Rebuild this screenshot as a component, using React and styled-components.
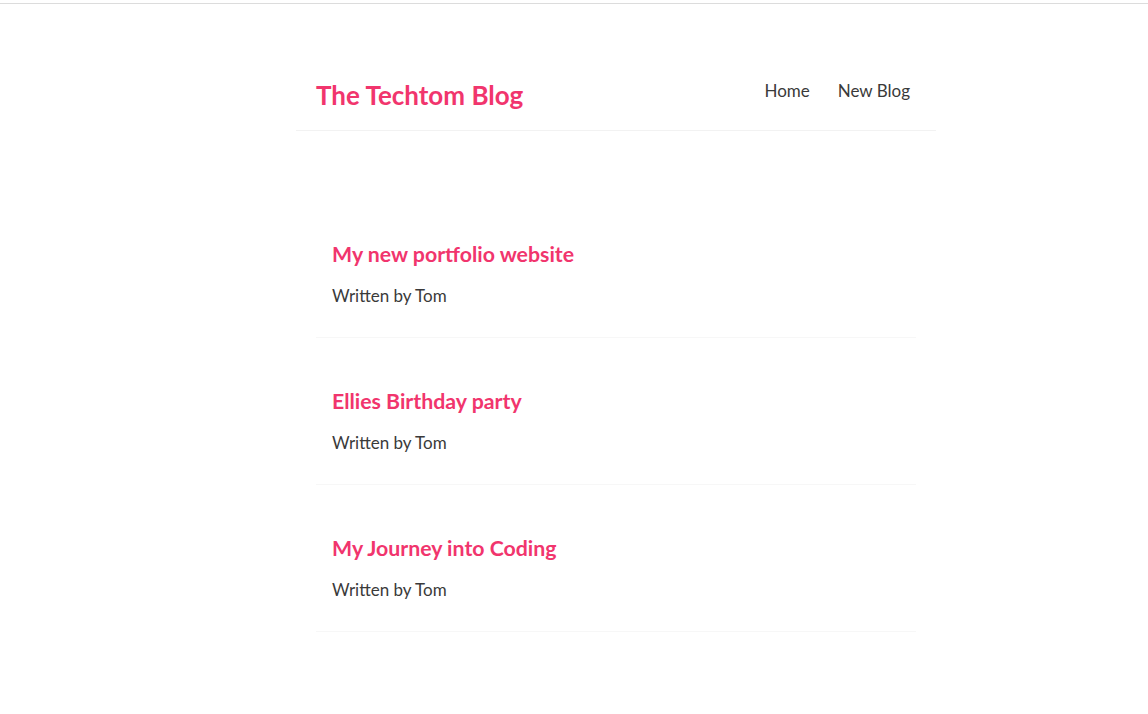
import React from "react";
import styled, { createGlobalStyle } from "styled-components";

const GlobalStyle = createGlobalStyle`
  body {
    margin: 0;
    background: #fff;
    font-family: Lato, "Noto Sans", sans-serif;
    color: #333;
  }
`;

const TopRule = styled.div`
  margin-top: 3px;
  height: 1px;
  background: #dcdcdc;
`;

const Page = styled.div`
  padding-left: 84px;
`;

const Navbar = styled.nav`
  box-sizing: border-box;
  width: 640px;
  height: 127px;
  margin: 0 auto;
  padding: 76px 20px 20px;
  display: flex;
  align-items: flex-start;
  border-bottom: 1px solid #f2f2f2;
`;

const Title = styled.h1`
  margin: 0;
  font-size: 26px;
  line-height: 30px;
  font-weight: 700;
  color: #f1356d;
`;

const Links = styled.div`
  margin-left: auto;
  display: flex;
`;

const NavLink = styled.a`
  margin-left: 16px;
  padding: 0 6px;
  font-size: 17px;
  line-height: 22px;
  color: #3a3a3a;
  text-decoration: none;
`;

const Content = styled.main`
  width: 600px;
  margin: 80px auto 0;
`;

const Preview = styled.div`
  padding: 30px 16px 30px;
  margin: 20px 0;
  border-bottom: 1px solid #f7f7f7;
`;

const PostTitle = styled.h2`
  margin: 0;
  font-size: 21.3px;
  line-height: 26px;
  font-weight: 700;
  color: #f1356d;
`;

const Author = styled.p`
  margin: 18px 0 0;
  font-size: 17px;
  line-height: 22px;
  color: #3a3a3a;
`;

const blogs = [
  { id: 1, title: "My new portfolio website", author: "Tom" },
  { id: 2, title: "Ellies Birthday party", author: "Tom" },
  { id: 3, title: "My Journey into Coding", author: "Tom" },
];

export default function App() {
  return (
    <>
      <GlobalStyle />
      <TopRule />
      <Page>
        <Navbar>
          <Title>The Techtom Blog</Title>
          <Links>
            <NavLink href="#">Home</NavLink>
            <NavLink href="#">New Blog</NavLink>
          </Links>
        </Navbar>
        <Content>
          {blogs.map((blog) => (
            <Preview key={blog.id}>
              <PostTitle>{blog.title}</PostTitle>
              <Author>Written by {blog.author}</Author>
            </Preview>
          ))}
        </Content>
      </Page>
    </>
  );
}
